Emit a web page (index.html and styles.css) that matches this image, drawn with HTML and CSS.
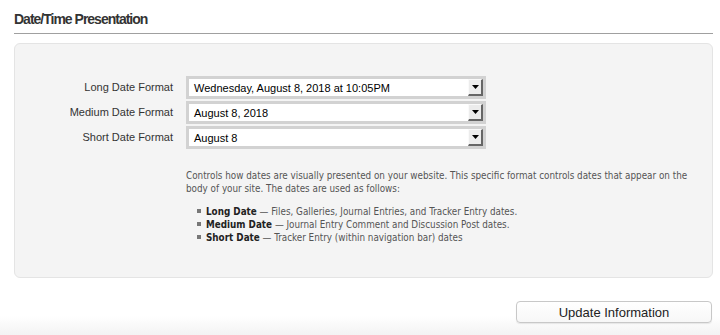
FILE: index.html
```html
<!DOCTYPE html>
<html>
<head>
<meta charset="utf-8">
<link rel="stylesheet" href="styles.css">
</head>
<body>
<div class="page">
  <h2 class="title">Date/Time Presentation</h2>
  <div class="panel">
    <div class="form-grid">
      <label class="field-label">Long Date Format</label>
      <div class="select"><span class="select-value">Wednesday, August 8, 2018 at 10:05PM</span><span class="select-btn"><svg width="7" height="4" viewBox="0 0 7 4"><polygon points="0,0 7,0 3.5,4" fill="#000"/></svg></span></div>
      <label class="field-label">Medium Date Format</label>
      <div class="select"><span class="select-value">August 8, 2018</span><span class="select-btn"><svg width="7" height="4" viewBox="0 0 7 4"><polygon points="0,0 7,0 3.5,4" fill="#000"/></svg></span></div>
      <label class="field-label">Short Date Format</label>
      <div class="select"><span class="select-value">August 8</span><span class="select-btn"><svg width="7" height="4" viewBox="0 0 7 4"><polygon points="0,0 7,0 3.5,4" fill="#000"/></svg></span></div>
    </div>
    <div class="desc">
      <p class="desc-text">Controls how dates are visually presented on your website. This specific format controls dates that appear on the body of your site. The dates are used as follows:</p>
      <ul class="desc-list">
        <li><b>Long Date</b> — Files, Galleries, Journal Entries, and Tracker Entry dates.</li>
        <li><b>Medium Date</b> — Journal Entry Comment and Discussion Post dates.</li>
        <li><b>Short Date</b> — Tracker Entry (within navigation bar) dates</li>
      </ul>
    </div>
  </div>
  <div class="actions">
    <button class="btn">Update Information</button>
  </div>
</div>
</body>
</html>
```
FILE: styles.css
```css
html, body {
  margin: 0;
  padding: 0;
  background: #fff;
}
.page {
  width: 699px;
  padding: 11px 0 0 14px;
  font-family: "Liberation Sans", Arial, sans-serif;
}
.title {
  margin: 0;
  font-size: 14px;
  line-height: 16px;
  font-weight: bold;
  letter-spacing: -1px;
  color: #333;
  padding-bottom: 6px;
  border-bottom: 1px solid #a0a0a0;
}
.panel {
  margin-top: 9px;
  background: #f4f4f4;
  border: 1px solid #e4e4e4;
  border-radius: 6px;
  padding: 32px 0 33px 0;
}
.form-grid {
  display: grid;
  grid-template-columns: 158px 300px;
  column-gap: 13px;
  row-gap: 2px;
}
.field-label {
  text-align: right;
  font-size: 11px;
  color: #333;
  line-height: 23px;
}
.select {
  display: flex;
  align-items: center;
  height: 23px;
  box-sizing: border-box;
  border: 3px solid #d2d2d2;
  background: #fff;
}
.select-value {
  flex: 1;
  padding-left: 5px;
  font-size: 11px;
  color: #000;
}
.select-btn {
  display: flex;
  align-items: center;
  justify-content: center;
  width: 15px;
  height: 17px;
  box-sizing: border-box;
  background: #ececec;
  border-top: 1px solid #fafafa;
  border-left: 1px solid #fafafa;
  border-right: 2px solid #666;
  border-bottom: 2px solid #666;
}
.select-btn svg {
  display: block;
}
.desc {
  padding-left: 171px;
  padding-right: 12px;
  margin-top: 20px;
  font-family: "DejaVu Sans Condensed", "DejaVu Sans", sans-serif;
  font-size: 9.8px;
  line-height: 13px;
  color: #555;
}
.desc-text {
  margin: 0;
}
.desc-list {
  margin: 10px 0 0 0;
  padding: 0 0 0 11px;
  list-style: none;
}
.desc-list li::before {
  content: "";
  display: inline-block;
  vertical-align: middle;
  width: 4px;
  height: 4px;
  margin: -2px 5px 0 0;
  background: #777;
}
.desc-list b {
  color: #222;
}
.actions {
  display: flex;
  justify-content: flex-end;
  padding-top: 23px;
  height: 34px;
  box-sizing: content-box;
  margin-left: -14px;
  width: 720px;
  background: linear-gradient(to bottom, #fff 0, #fff 38px, #f3f3f3 57px);
}
.btn {
  margin-right: 8px;
  width: 196px;
  height: 22px;
  border: 1px solid #c8c8c8;
  border-radius: 4px;
  background: linear-gradient(to bottom, #fff, #f7f7f7);
  box-shadow: 0 1px 1px rgba(0,0,0,0.08);
  font-family: "Liberation Sans", Arial, sans-serif;
  font-size: 13px;
  color: #222;
  padding: 0;
}
```
